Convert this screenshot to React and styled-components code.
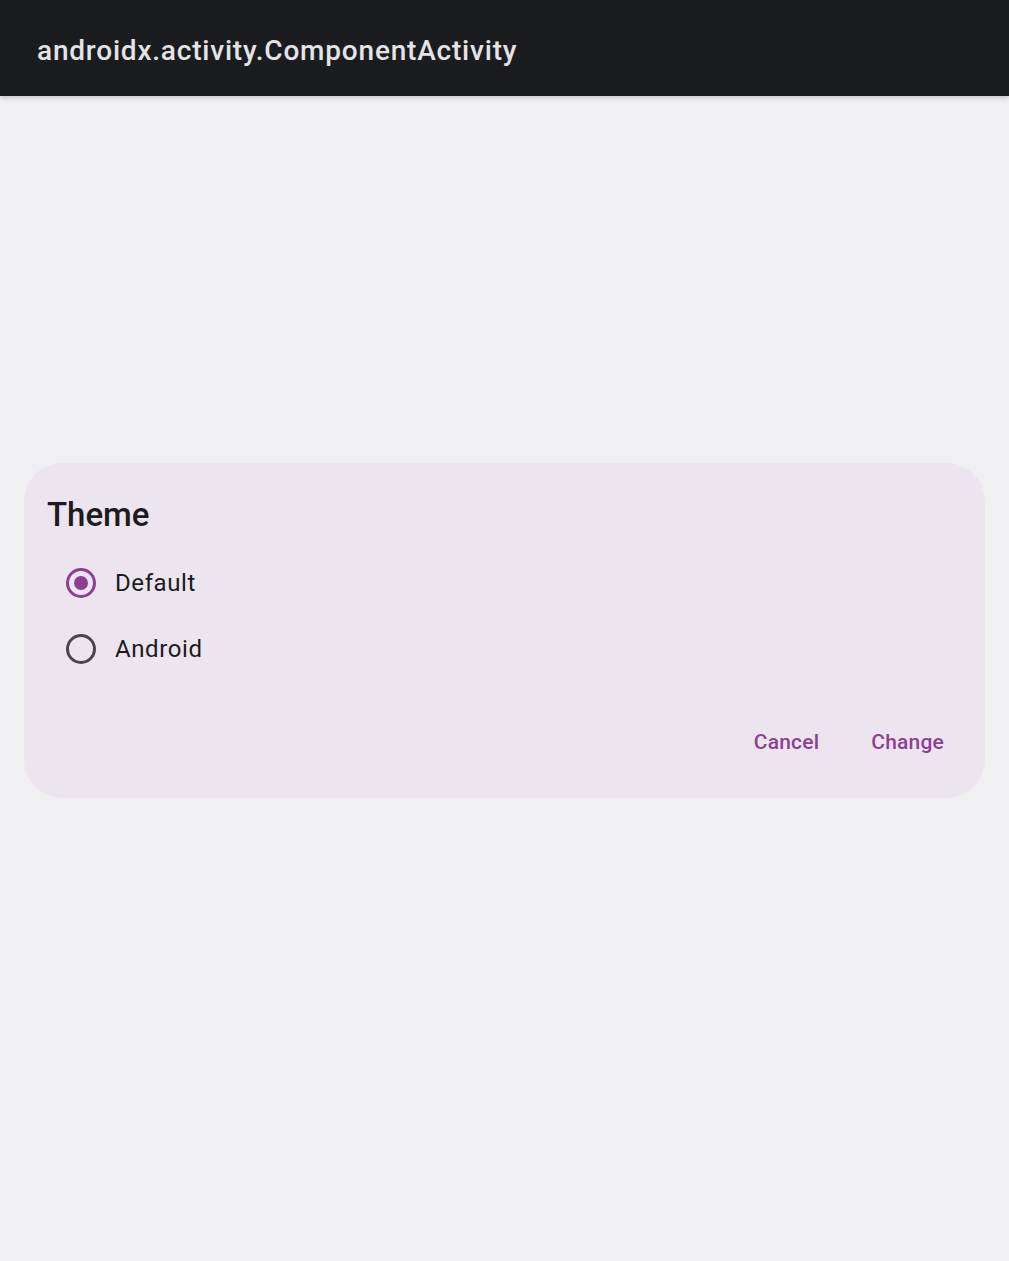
import React, { useState } from "react";
import styled, { createGlobalStyle } from "styled-components";

const GlobalStyle = createGlobalStyle`
  html, body {
    margin: 0;
    padding: 0;
    background: #f0eff2;
  }
  body {
    font-family: Roboto, "Noto Sans", sans-serif;
  }
`;

const Screen = styled.div`
  min-height: 1261px;
  display: flex;
  flex-direction: column;
  background: #f0eff2;
`;

const TopBar = styled.header`
  height: 96px;
  flex-shrink: 0;
  display: flex;
  align-items: center;
  padding: 0 37px;
  background: #1a1c1f;
  box-shadow: 0 2px 5px rgba(0, 0, 0, 0.18);
  position: relative;
  z-index: 1;
`;

const BarTitle = styled.h1`
  margin: 0;
  margin-top: 4px;
  font-size: 28px;
  font-weight: 500;
  color: #e4e3e6;
  letter-spacing: 0.8px;
`;

const Body = styled.main`
  padding: 367px 24px 0;
`;

const Dialog = styled.section`
  background: #ece5f0;
  border-radius: 38px;
  padding: 33px 41px 44px 23px;
  display: flex;
  flex-direction: column;
`;

const DialogTitle = styled.h2`
  margin: 0 0 25px;
  font-size: 33px;
  font-weight: 500;
  line-height: 38px;
  color: #1d1a20;
`;

const Options = styled.div`
  display: flex;
  flex-direction: column;
  gap: 18px;
  padding-left: 19px;
`;

const Option = styled.label`
  display: flex;
  align-items: center;
  gap: 19px;
  height: 48px;
  cursor: pointer;
`;

const RadioRing = styled.span`
  width: 30px;
  height: 30px;
  box-sizing: border-box;
  border-radius: 50%;
  border: 3px solid ${(p) => (p.$checked ? "#8e3f94" : "#49454f")};
  display: flex;
  align-items: center;
  justify-content: center;
  &::after {
    content: "";
    width: 14px;
    height: 14px;
    border-radius: 50%;
    background: #8e3f94;
    display: ${(p) => (p.$checked ? "block" : "none")};
  }
`;

const OptionText = styled.span`
  font-size: 24px;
  letter-spacing: 0.6px;
  color: #1d1a20;
`;

const Actions = styled.div`
  display: flex;
  justify-content: flex-end;
  gap: 52px;
  margin-top: 57px;
`;

const TextButton = styled.button`
  border: none;
  background: none;
  padding: 0;
  font-family: Roboto, sans-serif;
  font-size: 21px;
  font-weight: 500;
  letter-spacing: 0.2px;
  color: #8e3f94;
  line-height: 24px;
  cursor: pointer;
`;

const options = ["Default", "Android"];

export default function App() {
  const [theme, setTheme] = useState("Default");
  return (
    <>
      <GlobalStyle />
      <Screen>
        <TopBar>
          <BarTitle>androidx.activity.ComponentActivity</BarTitle>
        </TopBar>
        <Body>
          <Dialog>
            <DialogTitle>Theme</DialogTitle>
            <Options>
              {options.map((o) => (
                <Option key={o} onClick={() => setTheme(o)}>
                  <RadioRing $checked={theme === o} />
                  <OptionText>{o}</OptionText>
                </Option>
              ))}
            </Options>
            <Actions>
              <TextButton>Cancel</TextButton>
              <TextButton>Change</TextButton>
            </Actions>
          </Dialog>
        </Body>
      </Screen>
    </>
  );
}
